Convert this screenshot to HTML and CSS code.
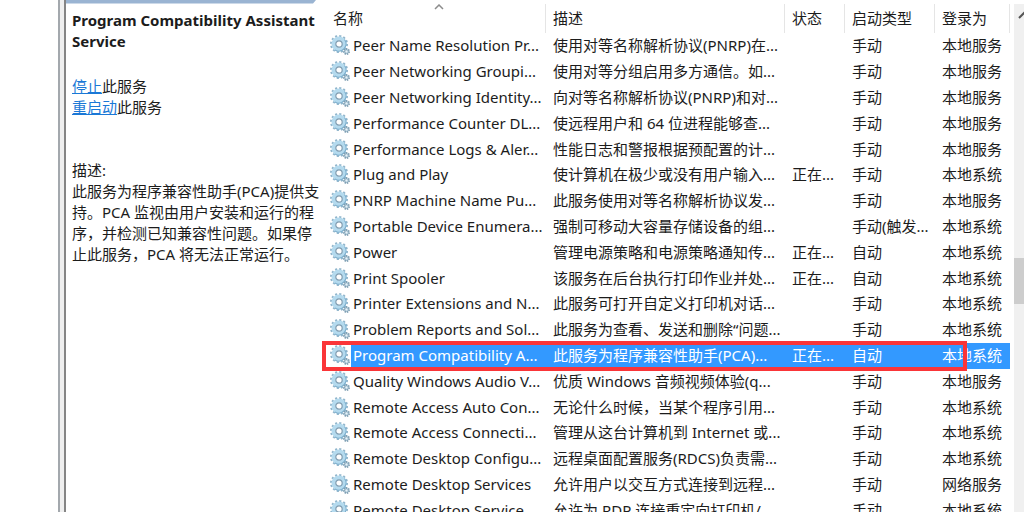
FILE: index.html
```html
<!DOCTYPE html>
<html lang="zh-CN">
<head>
  <meta charset="UTF-8">
  <meta name="viewport" content="width=device-width, initial-scale=1.0">
  <title>服务</title>
  <link rel="stylesheet" href="styles.css">
</head>
<body>

<!-- gear icon shared by all the rows -->
<svg class="sprite" aria-hidden="true">
  <symbol id="gear" viewBox="0 0 20 20">
    <circle cx="9" cy="9" r="8" fill="none" stroke="#8fb4cb" stroke-width="2" stroke-dasharray="2.1 2.09"/>
    <circle cx="9" cy="9" r="5.4" fill="none" stroke="#b4daee" stroke-width="4.2"/>
    <path d="M14.5 4.5A7.2 7.2 0 0 1 5 15" fill="none" stroke="#7fb0ce" stroke-width="1.2"/>
    <circle cx="9" cy="9" r="3.2" fill="#fff" stroke="#7d9bb0" stroke-width="1.2"/>
    <circle cx="16.5" cy="16.5" r="2.5" fill="#b3ccda" stroke="#7f9fb3" stroke-width="2" stroke-dasharray="1.3 0.9"/>
    <circle cx="16.5" cy="16.5" r="1" fill="#e8f3f9"/>
  </symbol>
</svg>

<div class="window">
  <div class="tree"></div>
  <div class="splitter"></div>

  <main class="content">
    <svg class="tab-edge" viewBox="0 0 252 4" aria-hidden="true"><path d="M0 0H250L247 3.5H0Z" fill="#9ab4d2"/></svg>

    <section class="detail">
      <h1>Program Compatibility Assistant Service</h1>
      <p class="actions">
        <a href="#">停止</a>此服务<br>
        <a href="#">重启动</a>此服务
      </p>
      <p>
        描述:<br>
        此服务为程序兼容性助手(PCA)提供支<br>
        持。PCA 监视由用户安装和运行的程<br>
        序，并检测已知兼容性问题。如果停<br>
        止此服务，PCA 将无法正常运行。
      </p>
    </section>

    <section class="list">
      <table>
        <colgroup>
          <col class="c-name">
          <col class="c-desc">
          <col class="c-status">
          <col class="c-type">
          <col class="c-logon">
        </colgroup>
        <thead>
          <tr>
            <th>名称<svg class="sort" viewBox="0 0 10 6" aria-hidden="true"><path d="M1 5L5 1L9 5" fill="none" stroke="#8c8c8c" stroke-width="1.5"/></svg></th>
            <th>描述</th>
            <th>状态</th>
            <th>启动类型</th>
            <th>登录为</th>
          </tr>
        </thead>
        <tbody>
          <tr><td><svg class="icon"><use href="#gear"/></svg><span>Peer Name Resolution Pr...</span></td><td>使用对等名称解析协议(PNRP)在...</td><td></td><td>手动</td><td>本地服务</td></tr>
          <tr><td><svg class="icon"><use href="#gear"/></svg><span>Peer Networking Groupi...</span></td><td>使用对等分组启用多方通信。如...</td><td></td><td>手动</td><td>本地服务</td></tr>
          <tr><td><svg class="icon"><use href="#gear"/></svg><span>Peer Networking Identity...</span></td><td>向对等名称解析协议(PNRP)和对...</td><td></td><td>手动</td><td>本地服务</td></tr>
          <tr><td><svg class="icon"><use href="#gear"/></svg><span>Performance Counter DL...</span></td><td>使远程用户和 64 位进程能够查...</td><td></td><td>手动</td><td>本地服务</td></tr>
          <tr><td><svg class="icon"><use href="#gear"/></svg><span>Performance Logs &amp; Aler...</span></td><td>性能日志和警报根据预配置的计...</td><td></td><td>手动</td><td>本地服务</td></tr>
          <tr><td><svg class="icon"><use href="#gear"/></svg><span>Plug and Play</span></td><td>使计算机在极少或没有用户输入...</td><td>正在...</td><td>手动</td><td>本地系统</td></tr>
          <tr><td><svg class="icon"><use href="#gear"/></svg><span>PNRP Machine Name Pu...</span></td><td>此服务使用对等名称解析协议发...</td><td></td><td>手动</td><td>本地服务</td></tr>
          <tr><td><svg class="icon"><use href="#gear"/></svg><span>Portable Device Enumera...</span></td><td>强制可移动大容量存储设备的组...</td><td></td><td>手动(触发...</td><td>本地系统</td></tr>
          <tr><td><svg class="icon"><use href="#gear"/></svg><span>Power</span></td><td>管理电源策略和电源策略通知传...</td><td>正在...</td><td>自动</td><td>本地系统</td></tr>
          <tr><td><svg class="icon"><use href="#gear"/></svg><span>Print Spooler</span></td><td>该服务在后台执行打印作业并处...</td><td>正在...</td><td>自动</td><td>本地系统</td></tr>
          <tr><td><svg class="icon"><use href="#gear"/></svg><span>Printer Extensions and N...</span></td><td>此服务可打开自定义打印机对话...</td><td></td><td>手动</td><td>本地系统</td></tr>
          <tr><td><svg class="icon"><use href="#gear"/></svg><span>Problem Reports and Sol...</span></td><td>此服务为查看、发送和删除“问题...</td><td></td><td>手动</td><td>本地系统</td></tr>
          <tr class="selected"><td><svg class="icon"><use href="#gear"/></svg><span>Program Compatibility A...</span><i class="marker"></i></td><td>此服务为程序兼容性助手(PCA)...</td><td>正在...</td><td>自动</td><td>本地系统</td></tr>
          <tr><td><svg class="icon"><use href="#gear"/></svg><span>Quality Windows Audio V...</span></td><td>优质 Windows 音频视频体验(q...</td><td></td><td>手动</td><td>本地服务</td></tr>
          <tr><td><svg class="icon"><use href="#gear"/></svg><span>Remote Access Auto Con...</span></td><td>无论什么时候，当某个程序引用...</td><td></td><td>手动</td><td>本地系统</td></tr>
          <tr><td><svg class="icon"><use href="#gear"/></svg><span>Remote Access Connecti...</span></td><td>管理从这台计算机到 Internet 或...</td><td></td><td>手动</td><td>本地系统</td></tr>
          <tr><td><svg class="icon"><use href="#gear"/></svg><span>Remote Desktop Configu...</span></td><td>远程桌面配置服务(RDCS)负责需...</td><td></td><td>手动</td><td>本地系统</td></tr>
          <tr><td><svg class="icon"><use href="#gear"/></svg><span>Remote Desktop Services</span></td><td>允许用户以交互方式连接到远程...</td><td></td><td>手动</td><td>网络服务</td></tr>
          <tr><td><svg class="icon"><use href="#gear"/></svg><span>Remote Desktop Service...</span></td><td>允许为 RDP 连接重定向打印机/...</td><td></td><td>手动</td><td>本地系统</td></tr>
        </tbody>
      </table>
    </section>
  </main>

  <div class="scrollbar">
    <svg class="arrow" viewBox="0 0 14 8" aria-hidden="true"><path d="M1 7L6 2L11 7" fill="none" stroke="#555" stroke-width="2"/></svg>
    <div class="thumb"></div>
  </div>
</div>

</body>
</html>
```
FILE: styles.css
```css
* {
  box-sizing: border-box;
}

body {
  margin: 0;
  overflow: hidden;
  background: #fff;
  color: #1c1c1c;
  font-family: "Noto Sans", "Noto Sans CJK SC", sans-serif;
  font-size: 15px;
  line-height: 21px;
}

.sprite {
  display: none;
}

.window {
  display: flex;
  height: 100vh;
  overflow: hidden;
}

.tree {
  flex: 0 0 58px;
}

.splitter {
  flex: 0 0 8px;
  background: #efefef;
  border-left: 2px solid #a3a8ad;
  border-right: 2px solid #858585;
}

.content {
  position: relative;
  display: flex;
  flex: 1;
  min-width: 0;
}

.tab-edge {
  position: absolute;
  top: 0;
  left: 0;
  width: 252px;
  height: 4px;
}

/* left side: details of the selected service */
.detail {
  flex: 0 0 256px;
  padding: 10px 0 0 6px;
  white-space: nowrap;
}

.detail h1 {
  margin: 0 0 24px;
  font-size: 15px;
  line-height: 21px;
  white-space: normal;
}

.detail p {
  margin: 0;
}

.detail .actions {
  margin-bottom: 42px;
}

.detail a {
  color: #1a78d6;
}

/* right side: list of services */
.list {
  flex: 1;
  min-width: 0;
}

table {
  width: 100%;
  table-layout: fixed;
  border-collapse: collapse;
}

.c-name { width: 224px; }
.c-status { width: 60px; }
.c-type { width: 90px; }
.c-logon { width: 75px; }

th,
td {
  padding: 0 0 0 7px;
  font-weight: normal;
  text-align: left;
  white-space: nowrap;
}

th {
  position: relative;
  height: 33px;
  padding-top: 3px;
  background: linear-gradient(#e5e5e5, #e5e5e5) right bottom / 1px 29px no-repeat;
}

th:first-child {
  padding-left: 11px;
}

.sort {
  position: absolute;
  top: 4px;
  left: 50%;
  width: 10px;
  height: 6px;
}

td {
  height: 26px;
  line-height: 24px;
  vertical-align: top;
}

tr:nth-child(5n) td {
  height: 25px;
}

td:first-child {
  padding-left: 8px;
}

.icon {
  width: 20px;
  height: 20px;
  margin-top: 2px;
  vertical-align: top;
}

td span {
  display: inline-block;
  padding-left: 3px;
  vertical-align: top;
}

.selected {
  position: relative;
  color: #fff;
}

.selected td {
  background: #3399ff;
}

.selected td:first-child {
  background: linear-gradient(#3399ff, #3399ff) 29px 0 no-repeat;
}

.marker {
  position: absolute;
  top: -2px;
  right: 43px;
  bottom: -2px;
  left: 0;
  border: 4px solid #fa3538;
}

.scrollbar {
  flex: 0 0 10px;
  min-width: 0;
  margin: 4px 0 0 4px;
  overflow: hidden;
  background: #f0f0f0;
}

.arrow {
  display: block;
  width: 14px;
  height: 8px;
  margin: 7px 0 0 4px;
}

.thumb {
  height: 46px;
  margin-top: 239px;
  background: #cdcdcd;
}
```
